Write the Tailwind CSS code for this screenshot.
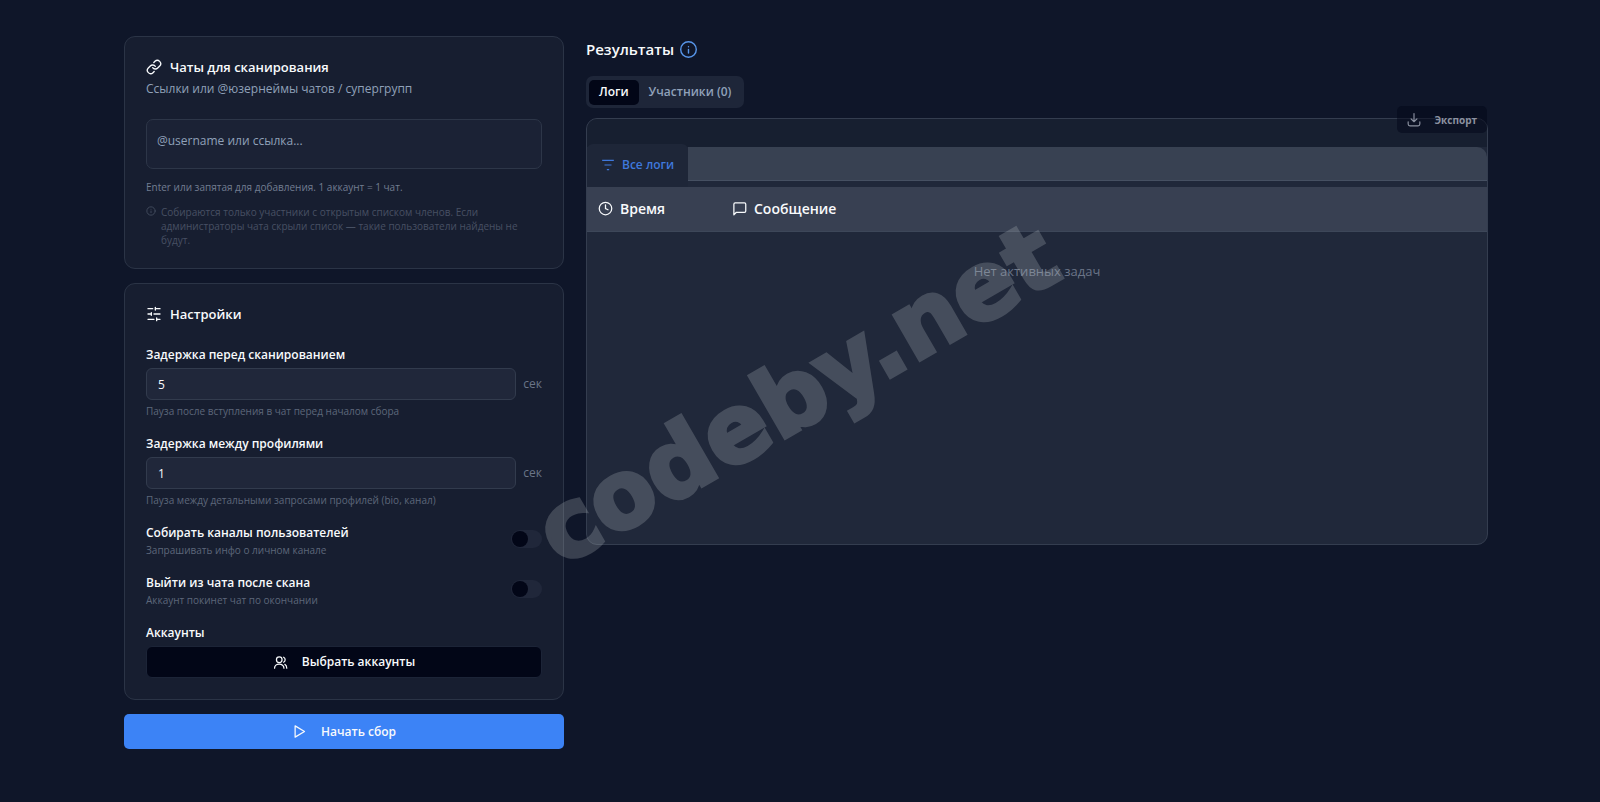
<!DOCTYPE html>
<html lang="ru">
<head>
<meta charset="utf-8">
<meta name="viewport" content="width=device-width, initial-scale=1">
<title>Сканирование чатов</title>
<script src="https://cdn.jsdelivr.net/npm/@tailwindcss/browser@4"></script>
</head>
<body class="relative min-h-screen overflow-x-hidden bg-[#0f1629] font-['Open_Sans','Noto_Sans',sans-serif] text-[12px] leading-[18px] text-slate-50">
<main class="grid grid-cols-3 items-start gap-[22px] pt-[36px] pr-[112px] pb-[52px] pl-[124px]">

  <form class="flex flex-col gap-[14px]">
    <section class="rounded-[11px] border border-[#2b3446] bg-[#171e30] px-[21px] pt-[20px] pb-[21px]">
      <h2 class="flex items-center gap-2 text-[13px] leading-[20px] font-semibold">
        <svg class="size-4" viewBox="0 0 24 24" fill="none" stroke="currentColor" stroke-width="2" stroke-linecap="round" stroke-linejoin="round"><path d="M10 13a5 5 0 0 0 7.540.540l3-3a5 5 0 0 0-7.070-7.070l-1.720 1.710"/><path d="M14 11a5 5 0 0 0-7.540-.540l-3 3a5 5 0 0 0 7.070 7.070l1.710-1.710"/></svg>
        Чаты для сканирования
      </h2>
      <p class="mt-[3px] text-slate-400">Ссылки или @юзернеймы чатов / супергрупп</p>
      <textarea aria-label="Чаты" placeholder="@username или ссылка..." class="mt-[21px] block h-[50px] w-full resize-none rounded-[7px] border border-[#2d3648] bg-[#1b2235] px-[10px] py-[12px] placeholder:text-slate-400"></textarea>
      <p class="mt-[10px] text-[10px] leading-[16px] text-[#727d90]">Enter или запятая для добавления. 1 аккаунт = 1 чат.</p>
      <p class="mt-[10px] flex items-start gap-[5px] text-[10px] leading-[14px] text-[#475063]">
        <svg class="mt-px size-[10px] shrink-0" viewBox="0 0 24 24" fill="none" stroke="currentColor" stroke-width="2" stroke-linecap="round"><circle cx="12" cy="12" r="10"/><path d="M12 16v-4M12 8h.01"/></svg>
        <span>Собираются только участники с открытым списком членов. Если администраторы чата скрыли список — такие пользователи найдены не будут.</span>
      </p>
    </section>

    <section class="rounded-[11px] border border-[#2b3446] bg-[#171e30] px-[21px] pt-[20px] pb-[21px]">
      <h2 class="flex items-center gap-2 text-[13px] leading-[20px] font-semibold">
        <svg class="size-4" viewBox="0 0 24 24" fill="none" stroke="currentColor" stroke-width="2" stroke-linecap="round"><path d="M3 4h7M14 4h7M3 12h5M12 12h9M3 20h9M16 20h5M14 2v4M8 10v4M16 18v4"/></svg>
        Настройки
      </h2>
      <div class="mt-[22px]">
        <label for="d1" class="block font-semibold">Задержка перед сканированием</label>
        <div class="mt-[4px] flex items-center gap-[7px]">
          <input id="d1" value="5" class="h-[32px] min-w-0 flex-1 rounded-[6px] border border-[#323b4d] bg-[#20273a] px-[11px]">
          <span class="text-[#6b7588]">сек</span>
        </div>
        <p class="mt-[4px] text-[10px] leading-[15px] text-[#5d677a]">Пауза после вступления в чат перед началом сбора</p>
      </div>
      <div class="mt-[16px]">
        <label for="d2" class="block font-semibold">Задержка между профилями</label>
        <div class="mt-[4px] flex items-center gap-[7px]">
          <input id="d2" value="1" class="h-[32px] min-w-0 flex-1 rounded-[6px] border border-[#323b4d] bg-[#20273a] px-[11px]">
          <span class="text-[#6b7588]">сек</span>
        </div>
        <p class="mt-[4px] text-[10px] leading-[15px] text-[#5d677a]">Пауза между детальными запросами профилей (bio, канал)</p>
      </div>
      <div class="mt-[16px] flex items-start justify-between">
        <div>
          <label for="s1" class="block font-semibold">Собирать каналы пользователей</label>
          <p class="text-[10px] leading-[16px] text-[#5d677a]">Запрашивать инфо о личном канале</p>
        </div>
        <input id="s1" type="checkbox" role="switch" class="mt-[6px] h-[18px] w-[31px] appearance-none rounded-full bg-[#20273a] p-px before:block before:size-4 before:rounded-full before:bg-[#020617] checked:before:translate-x-[13px]">
      </div>
      <div class="mt-[16px] flex items-start justify-between">
        <div>
          <label for="s2" class="block font-semibold">Выйти из чата после скана</label>
          <p class="text-[10px] leading-[16px] text-[#5d677a]">Аккаунт покинет чат по окончании</p>
        </div>
        <input id="s2" type="checkbox" role="switch" class="mt-[6px] h-[18px] w-[31px] appearance-none rounded-full bg-[#20273a] p-px before:block before:size-4 before:rounded-full before:bg-[#020617] checked:before:translate-x-[13px]">
      </div>
      <h3 class="mt-[16px] font-semibold">Аккаунты</h3>
      <button type="button" class="mt-[4px] flex h-[32px] w-full items-center justify-center gap-[14px] rounded-[6px] border border-[#1c2437] bg-[#020617] font-semibold">
        <svg class="size-[15px]" viewBox="0 0 24 24" fill="none" stroke="currentColor" stroke-width="2" stroke-linecap="round"><circle cx="10" cy="7.500" r="4.500"/><path d="M2.500 21a7.500 6.500 0 0 1 15 0M17 3.500a4.500 4.500 0 0 1 0 8M19 15c2 1 3 3 3 6"/></svg>
        Выбрать аккаунты
      </button>
    </section>

    <button type="submit" class="flex h-[35px] w-full items-center justify-center gap-[14px] rounded-[5px] bg-[#3c83f6] font-semibold">
      <svg class="size-[15px]" viewBox="0 0 24 24" fill="none" stroke="currentColor" stroke-width="2" stroke-linejoin="round"><path d="M5 3l15 9-15 9z"/></svg>
      Начать сбор
    </button>
  </form>

  <section class="col-span-2">
    <h1 class="flex h-[26px] items-center gap-[6px] text-[15px] font-semibold">
      Результаты
      <svg class="size-[17px] text-[#5795e8]" viewBox="0 0 24 24" fill="none" stroke="currentColor" stroke-width="2" stroke-linecap="round"><circle cx="12" cy="12" r="11"/><path d="M12 17v-5M12 8h.01"/></svg>
    </h1>
    <div role="tablist" class="mt-[14px] flex h-[32px] w-fit items-center rounded-[7px] bg-[#1e2639] px-[3px] font-semibold">
      <button role="tab" aria-selected="true" class="h-[25px] rounded-[5px] bg-[#020617] px-[10px]">Логи</button>
      <button role="tab" aria-selected="false" class="h-[25px] px-[10px] text-slate-400">Участники (0)</button>
    </div>

    <div class="relative mt-[10px] min-h-[427px] rounded-[11px] border border-[#343d4f] bg-[#20283a]">
      <div class="h-[28px] rounded-t-[10px] bg-[#171f30]"></div>
      <div class="flex h-[40px]">
        <button class="-mt-[3px] flex h-[43px] items-center gap-[7px] rounded-t-[6px] bg-[#1e2638] px-[14px] pb-[2px] font-semibold text-[#3f78dc]">
          <svg class="size-[14px]" viewBox="0 0 24 24" fill="none" stroke="currentColor" stroke-width="2"><path d="M2 4h20M6 12h12M10 20h4"/></svg>
          Все логи
        </button>
        <div class="h-[34px] flex-1 rounded-tr-[10px] border-b border-[#465062] bg-[#384152]"></div>
      </div>
      <table class="w-full table-fixed text-left">
        <thead class="bg-[#384052]">
          <tr class="h-[44px] border-b border-[#3d4759] text-[14px]">
            <th class="w-[134px] pl-[11px] font-semibold"><span class="flex items-center gap-[7px]"><svg class="size-[15px]" viewBox="0 0 24 24" fill="none" stroke="currentColor" stroke-width="2" stroke-linecap="round"><circle cx="12" cy="12" r="10"/><path d="M12 6v6l4 2"/></svg>Время</span></th>
            <th class="pl-[11px] font-semibold"><span class="flex items-center gap-[7px]"><svg class="size-[15px]" viewBox="0 0 24 24" fill="none" stroke="currentColor" stroke-width="2" stroke-linejoin="round"><path d="M22 16a2 2 0 0 1-2 2H7l-4 4V5a2 2 0 0 1 2-2h15a2 2 0 0 1 2 2z"/></svg>Сообщение</span></th>
          </tr>
        </thead>
        <tbody><tr><td colspan="2" class="pt-[30px] text-center text-[13px] text-[#6b7588]">Нет активных задач</td></tr></tbody>
      </table>
      <button disabled class="absolute -top-[13px] right-0 flex h-[27px] items-center gap-[13px] rounded-[5px] bg-[#020617]/50 px-[10px] text-[10px] font-bold text-[#8b91a0]">
        <svg class="size-[14px]" viewBox="0 0 24 24" fill="none" stroke="currentColor" stroke-width="2" stroke-linecap="round" stroke-linejoin="round"><path d="M12 1v14M7 10l5 5 5-5M2 15v4a3 3 0 0 0 3 3h14a3 3 0 0 0 3-3v-4"/></svg>
        Экспорт
      </button>
    </div>
  </section>
</main>
<div class="pointer-events-none absolute top-[394px] left-[797px] -translate-1/2 -rotate-30 font-['DejaVu_Sans',sans-serif] text-[94px] leading-none font-bold text-[#b5bcc0] opacity-25 [-webkit-text-stroke:4px_#b5bcc0]">codeby.net</div>
</body>
</html>
